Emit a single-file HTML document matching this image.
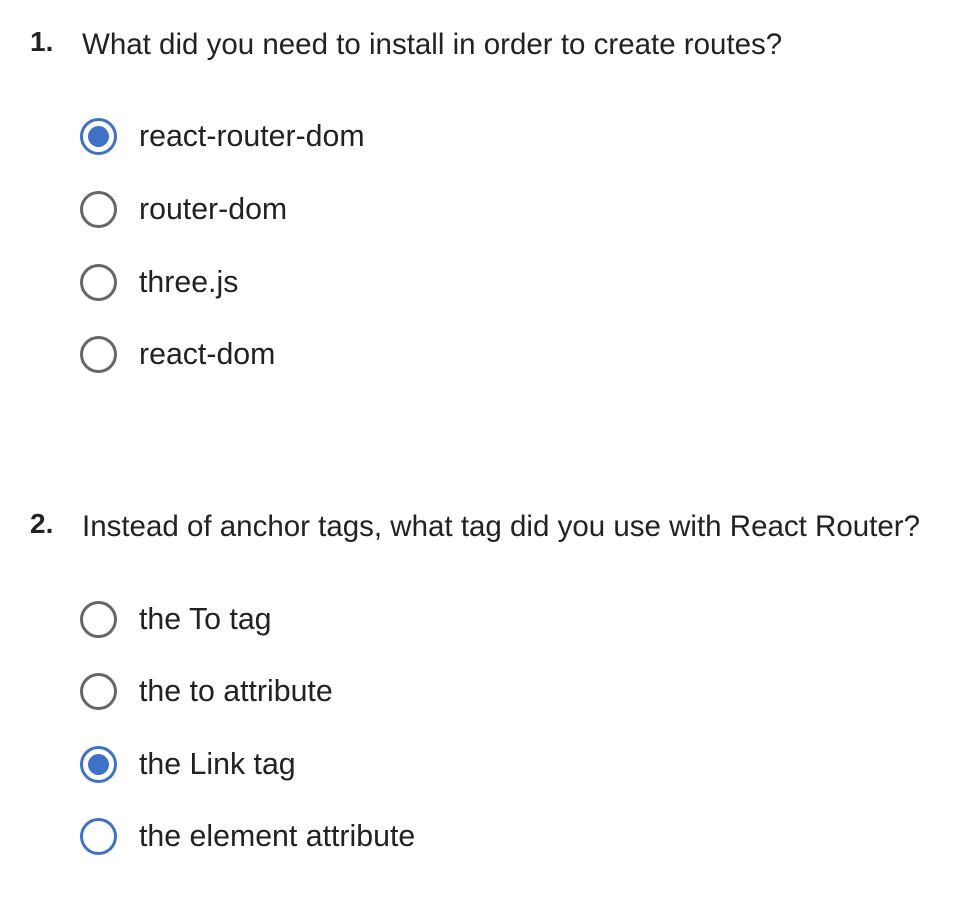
<!DOCTYPE html>
<html><head><style>
body{margin:0;width:976px;height:920px;background:#fff;font-family:"Liberation Sans",sans-serif;color:#222;position:relative;overflow:hidden}
.q{position:absolute;left:82px;font-size:29.5px;line-height:30px;white-space:nowrap}
.n{position:absolute;left:30px;font-size:28px;font-weight:bold;line-height:30px;color:#222}
.o{position:absolute;left:139px;font-size:30.3px;line-height:30px;white-space:nowrap}
.r{position:absolute;left:80px;width:31px;height:31px;border:3.5px solid #666;border-radius:50%;box-sizing:content-box}
.r.b{border-color:#3f72c6}
.r.s::after{content:"";position:absolute;left:5px;top:5px;width:21px;height:21px;border-radius:50%;background:#3f72c6}
</style></head><body>
<div class="n" style="top:27px">1.</div>
<div class="q" style="top:30px">What did you need to install in order to create routes?</div>
<div class="r b s" style="top:118px"></div><div class="o" style="top:122px">react-router-dom</div>
<div class="r" style="top:191px"></div><div class="o" style="top:195px">router-dom</div>
<div class="r" style="top:264px"></div><div class="o" style="top:268px">three.js</div>
<div class="r" style="top:336px"></div><div class="o" style="top:340px">react-dom</div>
<div class="n" style="top:509px">2.</div>
<div class="q" style="top:512px">Instead of anchor tags, what tag did you use with React Router?</div>
<div class="r" style="top:601px"></div><div class="o" style="top:605px">the To tag</div>
<div class="r" style="top:673px"></div><div class="o" style="top:677px">the to attribute</div>
<div class="r b s" style="top:746px"></div><div class="o" style="top:750px">the Link tag</div>
<div class="r b" style="top:818px"></div><div class="o" style="top:822px">the element attribute</div>
</body></html>
